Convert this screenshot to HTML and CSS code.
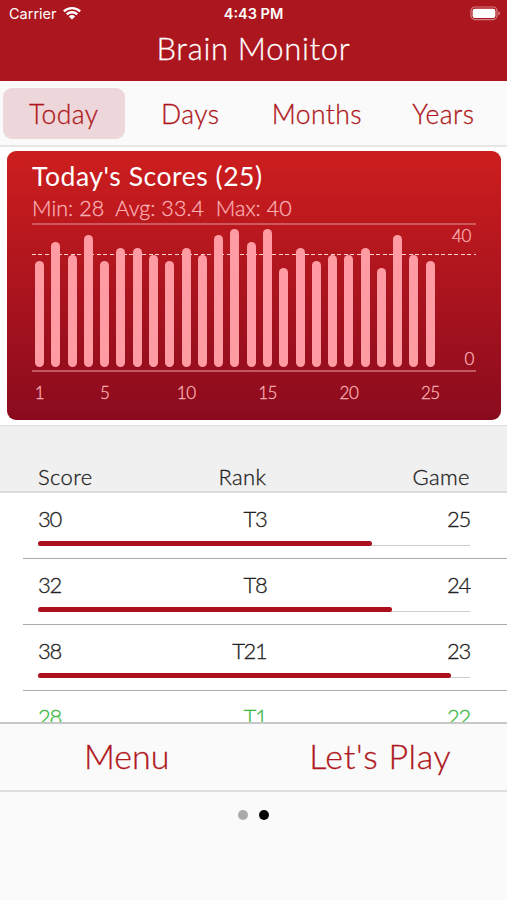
FILE: index.html
```html
<!DOCTYPE html>
<html lang="en">
<head>
  <meta charset="UTF-8" />
  <meta name="viewport" content="width=device-width, initial-scale=1.0" />
  <title>Brain Monitor</title>
  <link rel="stylesheet" href="styles.css">
</head>
<body>

  <header>
    <div class="status-bar">
      <div class="carrier">
        <span>Carrier</span>
        <svg width="18" height="14" viewBox="0 0 18 14" fill="#fff">
          <path d="M0 4.6 A12.8 12.8 0 0 1 18 4.6 L16.3 6.3 A10.4 10.4 0 0 0 1.7 6.3 Z"/>
          <path d="M2.9 7.5 A8.8 8.8 0 0 1 15.1 7.5 L13.4 9.2 A6.3 6.3 0 0 0 4.6 9.2 Z"/>
          <path d="M5.8 10.4 A4.6 4.6 0 0 1 12.2 10.4 L9 13.6 Z"/>
        </svg>
      </div>
      <div class="time">4:43 PM</div>
      <div class="battery">
        <svg width="31" height="15" viewBox="0 0 31 15">
          <rect x="1" y="1" width="26" height="12.6" rx="4" fill="none" stroke="#fff" stroke-opacity=".45" stroke-width="1.2"/>
          <rect x="2.6" y="2.7" width="22.8" height="9.2" rx="2.2" fill="#fff"/>
          <path d="M28.4 5.2 Q30 6 30 7.3 Q30 8.7 28.4 9.4 Z" fill="#fff" fill-opacity=".5"/>
        </svg>
      </div>
    </div>
    <h1>Brain Monitor</h1>
  </header>

  <nav class="tabs">
    <button class="tab active">Today</button>
    <button class="tab">Days</button>
    <button class="tab">Months</button>
    <button class="tab">Years</button>
  </nav>

  <main>
    <section class="card">
      <h2>Today's Scores (25)</h2>
      <p class="summary">Min: 28&nbsp; Avg: 33.4&nbsp; Max: 40</p>
      <div class="chart">
        <div class="average"></div>
        <div class="bars">
          <span class="bar" style="height: 106px"></span>
          <span class="bar" style="height: 125.5px"></span>
          <span class="bar" style="height: 112.5px"></span>
          <span class="bar" style="height: 132px"></span>
          <span class="bar" style="height: 106px"></span>
          <span class="bar" style="height: 119px"></span>
          <span class="bar" style="height: 119px"></span>
          <span class="bar" style="height: 112.5px"></span>
          <span class="bar" style="height: 106px"></span>
          <span class="bar" style="height: 119px"></span>
          <span class="bar" style="height: 112.5px"></span>
          <span class="bar" style="height: 132px"></span>
          <span class="bar" style="height: 138.5px"></span>
          <span class="bar" style="height: 125.5px"></span>
          <span class="bar" style="height: 138.5px"></span>
          <span class="bar" style="height: 99.5px"></span>
          <span class="bar" style="height: 119px"></span>
          <span class="bar" style="height: 106px"></span>
          <span class="bar" style="height: 112.5px"></span>
          <span class="bar" style="height: 112.5px"></span>
          <span class="bar" style="height: 119px"></span>
          <span class="bar" style="height: 99.5px"></span>
          <span class="bar" style="height: 132px"></span>
          <span class="bar" style="height: 112.5px"></span>
          <span class="bar" style="height: 106px"></span>
        </div>
        <div class="y-axis">
          <span class="max">40</span>
          <span>0</span>
        </div>
      </div>
      <div class="x-axis">
        <span>1</span>
        <span>5</span>
        <span>10</span>
        <span>15</span>
        <span>20</span>
        <span>25</span>
      </div>
    </section>

    <section class="scores">
      <div class="columns table-head">
        <span>Score</span>
        <span>Rank</span>
        <span>Game</span>
      </div>
      <div class="row">
        <div class="columns num"><span>30</span><span>T3</span><span>25</span></div>
        <div class="track"><div class="fill" style="width: 77.4%"></div></div>
      </div>
      <div class="row">
        <div class="columns num"><span>32</span><span>T8</span><span>24</span></div>
        <div class="track"><div class="fill" style="width: 82%"></div></div>
      </div>
      <div class="row">
        <div class="columns num"><span>38</span><span>T21</span><span>23</span></div>
        <div class="track"><div class="fill" style="width: 95.5%"></div></div>
      </div>
      <div class="row best">
        <div class="columns num"><span>28</span><span>T1</span><span>22</span></div>
        <div class="track"><div class="fill" style="width: 72.7%"></div></div>
      </div>
    </section>
  </main>

  <footer>
    <div class="actions">
      <button>Menu</button>
      <button class="play">Let's Play</button>
    </div>
    <div class="pages">
      <span class="dot"></span>
      <span class="dot current"></span>
    </div>
  </footer>

</body>
</html>
```
FILE: styles.css
```css
* {
  box-sizing: border-box;
}
body {
  margin: 0;
  height: 900px;
  display: flex;
  flex-direction: column;
  overflow: hidden;
  background-color: #fff;
  font-family: Lato, "Liberation Sans", sans-serif;
  font-weight: 300;
  color: #222;
  -webkit-text-stroke: 0.3px;
}
h1, h2, p {
  margin: 0;
  white-space: nowrap;
}
button {
  border: none;
  background: none;
  padding: 0;
  font: inherit;
  color: #af1720;
  cursor: pointer;
}
header {
  height: 81px;
  flex: none;
  background-color: #ac161e;
  color: white;
}
.status-bar {
  height: 27px;
  display: grid;
  grid-template-columns: 1fr auto 1fr;
  align-items: center;
  padding: 0 6px 0 9px;
  font-family: Inter, "Liberation Sans", sans-serif;
  font-size: 14.5px;
  font-weight: 400;
  -webkit-text-stroke: 0;
}
.carrier {
  display: flex;
  align-items: center;
  gap: 6px;
}
.carrier svg {
  display: block;
  margin-bottom: 2px;
}
.time {
  font-size: 14.5px;
  font-weight: 600;
  margin-left: -3px;
}
.battery {
  display: flex;
  justify-content: flex-end;
}
h1 {
  font-size: 31px;
  line-height: 42px;
  font-weight: 300;
  text-align: center;
  letter-spacing: 0.7px;
}
.tabs {
  flex: none;
  height: 66px;
  display: grid;
  grid-template-columns: repeat(4, 1fr);
  gap: 5px;
  padding: 7px 3px 6px;
  background-color: #fafafa;
  border-bottom: 2px solid #e7e5e5;
}
.tab {
  font-size: 26.5px;
  border-radius: 9px;
  letter-spacing: 0.4px;
}
.tab.active {
  background-color: #eed7da;
}
main {
  height: 575px;
  flex: none;
  overflow: hidden;
}
.card {
  margin: 4px 6px 0 7px;
  height: 269px;
  padding: 9px 25px 0;
  border-radius: 9px;
  background: linear-gradient(#cd1e1e, #ac141e 50%, #8a0b1e);
  color: #fbb0b4;
}
h2 {
  color: white;
  font-size: 26.5px;
  line-height: 32px;
  font-weight: 400;
  letter-spacing: 0.55px;
  -webkit-text-stroke: 0;
}
.summary {
  font-size: 21.5px;
  line-height: 32px;
  letter-spacing: 0.05px;
}
.chart {
  position: relative;
  height: 149px;
  display: flex;
  justify-content: space-between;
  margin-top: -1px;
  border-top: 2px solid #d0575b;
  border-bottom: 2px solid #c25764;
}
.bars {
  width: 400px;
  margin-left: 3px;
  display: flex;
  justify-content: space-between;
  align-items: flex-end;
  padding-bottom: 3px;
  z-index: 1;
}
.bar {
  width: 9px;
  border-radius: 5px;
  background-color: #ff9ca3;
}
/* dashed line at the average score */
.average {
  position: absolute;
  left: 0;
  right: 0;
  top: 29px;
  height: 1px;
  background: repeating-linear-gradient(90deg, #ffd0d2 0 4px, transparent 4px 6.5px);
}
.y-axis {
  display: flex;
  flex-direction: column;
  justify-content: space-between;
  align-items: flex-end;
  padding: 1px 2px 1px 0;
  font-size: 17px;
  line-height: 20px;
}
.y-axis .max {
  margin-right: 3px;
}
.y-axis,
.x-axis {
  letter-spacing: -0.4px;
}
.x-axis {
  display: grid;
  grid-template-columns: 15px 115.5px repeat(4, 81.4px);
  padding-top: 10px;
  font-size: 17px;
  line-height: 21px;
}
.x-axis span {
  text-align: center;
}
.x-axis span:nth-child(n+3) {
  margin-left: -17px;
  margin-right: 17px;
}
.table-head {
  height: 68px;
  margin-top: 5px;
  padding-top: 37px;
  background-color: #f0f0f0;
  border-top: 1px solid #ddd;
  border-bottom: 2px solid #dcdcdc;
}
.columns {
  display: grid;
  grid-template-columns: 114px 114.5px 1fr;
  padding-left: 38px;
  padding-right: 37px;
  font-size: 22px;
  line-height: 28px;
  letter-spacing: 0.4px;
}
.columns span + span {
  text-align: right;
}
.row {
  height: 66px;
  margin-left: 23px;
  padding-top: 12px;
  border-bottom: 1px solid #aaa;
}
.row .columns {
  padding-left: 15px;
}
.num {
  letter-spacing: -1.3px;
}
.track {
  height: 5px;
  margin: 8px 37px 0 15px;
  border-bottom: 1px solid #ccc;
}
.fill {
  height: 5px;
  border-radius: 3px;
  background-color: #ac0f1e;
}
.best {
  color: #3cb944;
}
footer {
  flex: 1;
  background-color: #fafafa;
  border-top: 2px solid #c8c8c8;
}
.actions {
  height: 68px;
  display: grid;
  grid-template-columns: 1fr 1fr;
  padding-bottom: 3px;
  border-bottom: 2px solid #dfdfdf;
  font-size: 34px;
}
.play {
  letter-spacing: 0.7px;
}
.pages {
  display: flex;
  justify-content: center;
  gap: 11px;
  padding-top: 18px;
}
.dot {
  width: 10px;
  height: 10px;
  border-radius: 50%;
  background-color: #aaa;
}
.dot.current {
  background-color: #000;
}
```
